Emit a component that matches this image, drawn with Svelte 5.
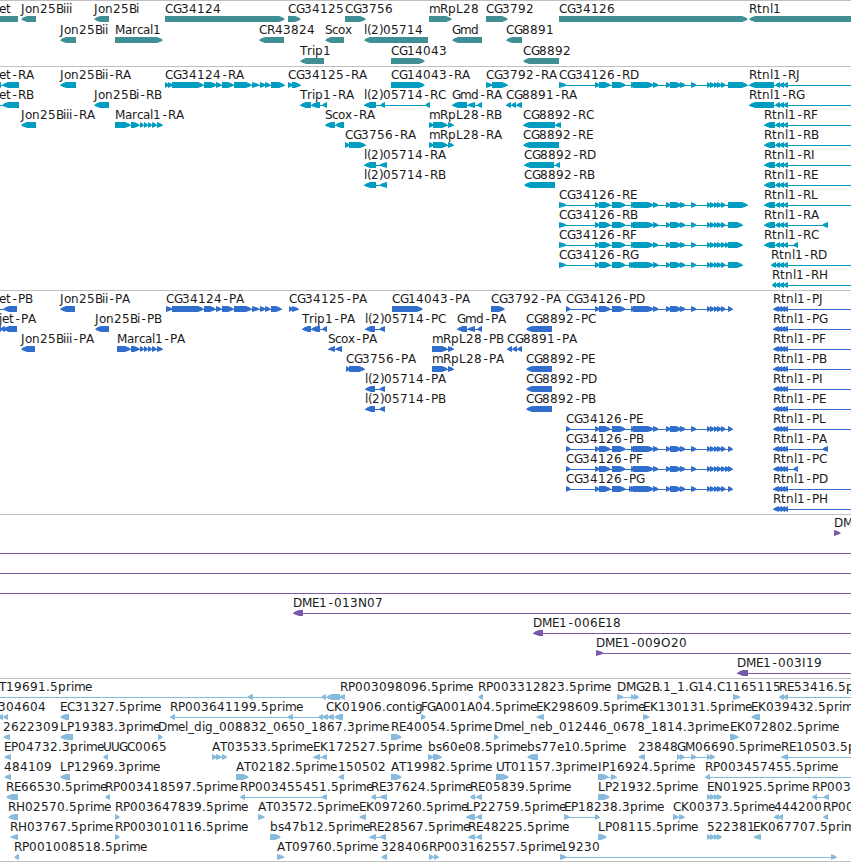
<script>
  // Advance widths, in pixels, of the label face at 12px.
  const groups = {
    3: 'ijl', 4: '.()', 5: 'rt', 6: '_Fsc', 7: 'EPTSBaeoxL-',
    8: '0123456789bdghnpqCGAUKR', 9: 'NHD', 10: 'MO', 11: 'm'
  };
  const advance = { J: 4, I: 4, ' ': 4 };
  for (const [w, chars] of Object.entries(groups)) {
    for (const c of chars) advance[c] = Number(w);
  }

  function positions(text, start) {
    let x = start;
    const xs = [];
    for (const c of text) {
      xs.push(c === '-' ? x + 1.5 : x);
      x += advance[c] ?? 7;
    }
    return xs.join(' ');
  }

  // One feature per line: row | label | label x | direction | segments | line start,end
  function parse(source) {
    return source.trim().split('\n').map((line) => {
      const [row, label, x, dir, segs, span] = line.trim().split('|');
      const segments = (segs || '').split(' ').filter(Boolean).map((s) => s.split(',').map(Number));
      const ends = span
        ? span.split(',').map(Number)
        : [segments[0][0], segments[segments.length - 1][1]];
      return { row: Number(row), label, x: Number(x), dir, segments, from: ends[0], to: ends[1], joined: !!span || segments.length > 1 };
    });
  }

  function shape([a, b], dir, mid) {
    const w = b - a;
    const tip = w < 9 ? w : 6;
    const t = mid - 3, m = mid + 0.3, u = mid + 3;
    return dir === 'R'
      ? `M${a} ${t}H${b - tip}L${b - tip * 0.35} ${t + 1.6}L${b} ${m}L${b - tip * 0.35} ${u - 1.6}L${b - tip} ${u}H${a}Z`
      : `M${b} ${t}H${a + tip}L${a + tip * 0.35} ${t + 1.6}L${a} ${m}L${a + tip * 0.35} ${u - 1.6}L${a + tip} ${u}H${b}Z`;
  }

  const genes = `
0|jet|-4|L|-20,18
0|Jon25Biii|21|L|21,36
0|Jon25Bi|94|L|94,109
0|CG34124|165|R|165,285
0|CG34125|288|R|288,301
0|CG3756|345|R|345,366
0|mRpL28|429|R|429,452
0|CG3792|486|R|486,508
0|CG34126|559|R|559,748
0|Rtnl1|749|L|749,870
1|Jon25Bii|60|L|60,76
1|Marcal1|115|R|115,163
1|CR43824|259|L|259,284
1|Scox|325|L|325,344
1|l(2)05714|364|L|364,428
1|Gmd|452|L|452,482
1|CG8891|506|L|506,522
2|Trip1|300|L|300,324
2|CG14043|391|R|391,425
2|CG8892|523|L|523,559`;

  const mid34126 = '595,600 599,611 612,626 631,637 633,654 653,659 666,671 670,682 680,686 691,697 707,711 710,715 714,718 717,722 721,726';
  const midG = mid34126.replace('631,637', '629,634 631,637');
  const rt = '775,780 779,784 783,788';

  const transcripts = `
0|jet-RA|-4|L|-6,1 2,19|-20,19
0|Jon25Bii-RA|60|L|60,76
0|CG34124-RA|165|R|165,169 168,173 172,204 204,217 216,222 222,234 234,252 252,260 260,266 265,271 271,285
0|CG34125-RA|288|R|288,293 292,301
0|CG14043-RA|391|R|391,425
0|CG3792-RA|486|R|486,493 492,508
0|CG34126-RD|559|R|559,567 ${mid34126} 728,748
0|Rtnl1-RJ|749|L|749,774 ${rt}|749,870
1|jet-RB|-4|L|2,19|-20,19
1|Jon25Bi-RB|94|L|94,109
1|Trip1-RA|300|L|300,311 311,320 322,327
1|l(2)05714-RC|364|L|364,376 380,385 425,430
1|Gmd-RA|452|L|452,467 467,475 477,482
1|CG8891-RA|506|L|506,511 511,516 516,522
1|Rtnl1-RG|749|L|749,774 ${rt}|749,870
2|Jon25Biii-RA|21|L|21,36
2|Marcal1-RA|115|R|115,131 131,140 140,144 144,148 148,152 152,157 157,163
2|Scox-RA|325|L|325,335 335,344
2|mRpL28-RB|429|R|429,434 433,448 448,454
2|CG8892-RC|523|L|523,555 555,561
2|Rtnl1-RF|764|L|764,775 ${rt}|764,870
3|CG3756-RA|345|R|345,350 349,366
3|mRpL28-RA|429|R|429,434 433,448 448,454
3|CG8892-RE|523|L|523,559
3|Rtnl1-RB|764|L|764,775 ${rt}|764,870
4|l(2)05714-RA|364|L|364,376 379,387
4|CG8892-RD|524|L|524,554 555,560
4|Rtnl1-RI|764|L|764,775 ${rt}|764,870
5|l(2)05714-RB|364|L|364,376 379,387
5|CG8892-RB|524|L|524,555
5|Rtnl1-RE|764|L|764,775 ${rt}|764,870
6|CG34126-RE|559|R|559,567 ${mid34126} 728,748
6|Rtnl1-RL|764|L|764,775 ${rt}|764,870
7|CG34126-RB|559|R|559,567 ${mid34126} 728,743
7|Rtnl1-RA|764|L|764,775 ${rt} 822,828
8|CG34126-RF|559|R|559,567 ${mid34126} 725,729 728,743
8|Rtnl1-RC|764|L|764,775 ${rt} 793,798
9|CG34126-RG|559|R|559,567 ${midG} 728,743
9|Rtnl1-RD|771|L|771,776 ${rt}|771,870
10|Rtnl1-RH|772|L|772,776 ${rt}|772,870`;

  const rp = '773,779 777,782 780,785 783,788';
  const proteins = `
0|jet-PB|-4|L|3,17|-20,17
0|Jon25Bii-PA|60|L|60,75
0|CG34124-PA|166|R|166,173 172,204 204,216 216,222 222,234 234,252 252,260 260,266 265,271 271,282
0|CG34125-PA|289|R|289,293 292,299
0|CG14043-PA|392|R|392,423
0|CG3792-PA|491|R|491,505
0|CG34126-PD|566|R|566,571 ${mid34126} 728,733
0|Rtnl1-PJ|773|L|${rp}|773,870
1|jet-PA|-1|L|-6,1 0,5 3,17|-20,17
1|Jon25Bi-PB|95|L|95,109
1|Trip1-PA|302|L|302,311 311,320 322,327
1|l(2)05714-PC|365|L|365,375 379,385
1|Gmd-PA|457|L|457,467 467,475 477,482
1|CG8892-PC|526|L|526,552
1|Rtnl1-PG|773|L|${rp}|773,870
2|Jon25Biii-PA|21|L|21,35
2|Marcal1-PA|117|R|117,131 131,140 140,144 144,148 148,152 152,157 157,163
2|Scox-PA|328|L|328,335 335,342
2|mRpL28-PB|432|R|432,448 448,454
2|CG8891-PA|507|L|507,512 512,517 517,522
2|Rtnl1-PF|773|L|${rp}|773,870
3|CG3756-PA|346|R|346,350 349,365
3|mRpL28-PA|432|R|432,448 448,454
3|CG8892-PE|526|L|526,552
3|Rtnl1-PB|773|L|${rp}|773,870
4|l(2)05714-PA|365|L|365,375 379,385
4|CG8892-PD|526|L|526,552
4|Rtnl1-PI|773|L|${rp}|773,870
5|l(2)05714-PB|365|L|365,375 379,385
5|CG8892-PB|526|L|526,552
5|Rtnl1-PE|773|L|${rp}|773,870
6|CG34126-PE|566|R|566,571 ${mid34126} 728,733
6|Rtnl1-PL|773|L|${rp}|773,870
7|CG34126-PB|566|R|566,571 ${mid34126} 728,733
7|Rtnl1-PA|773|L|${rp} 822,828
8|CG34126-PF|566|R|566,571 ${mid34126} 725,730 728,733
8|Rtnl1-PC|773|L|${rp} 793,798
9|CG34126-PG|566|R|566,571 ${midG} 728,733
9|Rtnl1-PD|773|L|${rp}|773,870
10|Rtnl1-PH|773|L|${rp}|773,870`;

  const clones = `
0|DME1|834|R|834,841
1||0|L||-10,870
2||0|L||-10,870
3||0|L||-10,870
4|DME1-013N07|293|L|293,303|293,870
5|DME1-006E18|533|L|533,543|533,870
6|DME1-009O20|596|R|596,604|596,870
7|DME1-003I19|737|L|737,748|737,870`;

  const ests = `
0|T19691.5prime|-1|L|247,253 321,326 326,340|-20,340
0|RP003098096.5prime|340|L|339,345
0|RP003312823.5prime|478|L|478,483
0|DMG2B.1_1.G14.C1|617|R|617,624 631,635 634,639
0|165115|733|R|733,741
0|RE53416.5prime|779|L|779,784 783,788|779,870
1|304604|-2|L|-3,3 3,8
1|EC31327.5prime|60|L|60,69
1|RP003641199.5prime|170|L|170,175 287,293 318,323 322,328 327,334
1|CK01906.contig|326|L|334,343
1|FGA001A04.5prime|421|R|421,426
1|EK298609.5prime|536|L|536,544
1|EK130131.5prime|643|R|643,650
1|EK039432.5prime|751|L|751,760
2|2622309|3|L|3,10
2|LP19383.3prime|60|L|60,73
2|Dmel_dig_008832_0650_1867.3prime|158|R|158,163
2|RE40054.5prime|391|R|391,402
2|Dmel_neb_012446_0678_1814.3prime|494|R|494,499
2|EK072802.5prime|730|R|730,739
3|EP04732.3prime|4|L|4,11
3|UUGC0065|103|L|103,108
3|AT03533.5prime|212|R|212,217 216,222 222,227
3|EK172527.5prime|313|L|313,320 321,327
3|bs60e08.5prime|428|R|428,434 433,442
3|bs77e10.5prime|527|L|527,538
3|23848|638|L|638,645
3|GM06690.5prime|677|R|677,681 680,685 691,697 707,711 710,715
3|RE10503.5prime|781|L|781,788|781,870
4|484109|4|L|4,11
4|LP12969.3prime|60|L|60,70
4|AT02182.5prime|236|R|236,249
4|150502|338|L|338,344
4|AT19982.5prime|391|R|391,402
4|UT01157.3prime|496|R|496,509
4|IP16924.5prime|598|R|598,609 611,617
4|RP003457455.5prime|705|L|705,710|705,870
5|RE66530.5prime|6|L|6,18
5|RP003418597.5prime|105|L|105,110
5|RP003455451.5prime|240|L|240,245 321,327
5|RE37624.5prime|371|L|371,376 379,387
5|RE05839.5prime|470|L|470,475 476,482
5|LP21932.5prime|598|R|598,610
5|EN01925.5prime|707|R|707,711 710,715 714,718 717,722
5|RP003|812|L|812,817 823,829
6|RH02570.5prime|8|L|8,18
6|RP003647839.5prime|115|R|115,120
6|AT03572.5prime|258|R|258,265
6|EK097260.5prime|359|L|359,366
6|LP22759.5prime|466|L|466,475 476,482
6|EP18238.3prime|564|R|564,570 595,600
6|CK00373.5prime|673|R|673,679 679,685
6|444200|774|L|774,779 778,783
6|RP003|823|L|823,828
7|RH03767.5prime|10|L|10,18
7|RP003010116.5prime|115|R|115,120
7|bs47b12.5prime|270|R|270,281
7|RE28567.5prime|369|L|369,376 379,386
7|RE48225.5prime|468|L|468,475 476,482
7|LP08115.5prime|598|R|598,607
7|522381|707|R|707,711 710,715 714,718 717,722
7|EK067707.5prime|753|L|753,761
8|RP001008518.5prime|14|L|14,19
8|AT09760.5prime|277|R|277,285
8|328406|381|L|381,387
8|RP003162557.5prime|429|R|429,434 434,439
8|19230|560|R|560,567 831,837`;

  const tracks = [
    { name: 'genes', height: 66, pitch: 21, features: parse(genes) },
    { name: 'transcripts', height: 224, pitch: 20, features: parse(transcripts) },
    { name: 'proteins', height: 224, pitch: 20, features: parse(proteins) },
    { name: 'clones', height: 164, pitch: 20, features: parse(clones) },
    { name: 'ests', height: 184, pitch: 20, features: parse(ests) }
  ];
</script>

<main class="browser">
  {#each tracks as track}
    <section class="track {track.name}">
      <svg width="851" height={track.height - 1} viewBox="0 1 851 {track.height - 1}">
        {#each track.features as f}
          {@const mid = 19 + f.row * track.pitch}
          {#if f.joined}
            <rect class="join" x={f.from} y={mid} width={f.to - f.from} height="1" />
          {/if}
          {#each f.segments as s}
            <path class="segment" d={shape(s, f.dir, mid)} />
          {/each}
        {/each}
        {#each track.features as f}
          {#if f.label}
            <text x={positions(f.label, f.x)} y={13 + f.row * track.pitch}>{f.label}</text>
          {/if}
        {/each}
      </svg>
    </section>
  {/each}
</main>

<style>
  :global(body) {
    margin: 0;
    background: #fff;
    overflow: hidden;
  }
  .browser {
    display: flex;
    flex-direction: column;
    width: 851px;
    height: 862px;
    overflow: hidden;
    box-sizing: border-box;
    border-bottom: 1px solid #c0c0c0;
    background: #fff;
  }
  .track {
    flex: none;
    border-top: 1px solid #c0c0c0;
  }
  .ests {
    flex: 0 0 183px;
    box-sizing: border-box;
    overflow: hidden;
  }
  svg {
    display: block;
    overflow: hidden;
  }
  text {
    font: 12px 'DejaVu Sans', sans-serif;
    fill: #1a1a1a;
  }
  .join {
    shape-rendering: crispEdges;
  }
  .genes { fill: #3f8f94; }
  .transcripts { fill: #009dc0; }
  .proteins { fill: #306dcc; }
  .clones { fill: #7858a8; }
  .ests { fill: #87bbdd; }
</style>
